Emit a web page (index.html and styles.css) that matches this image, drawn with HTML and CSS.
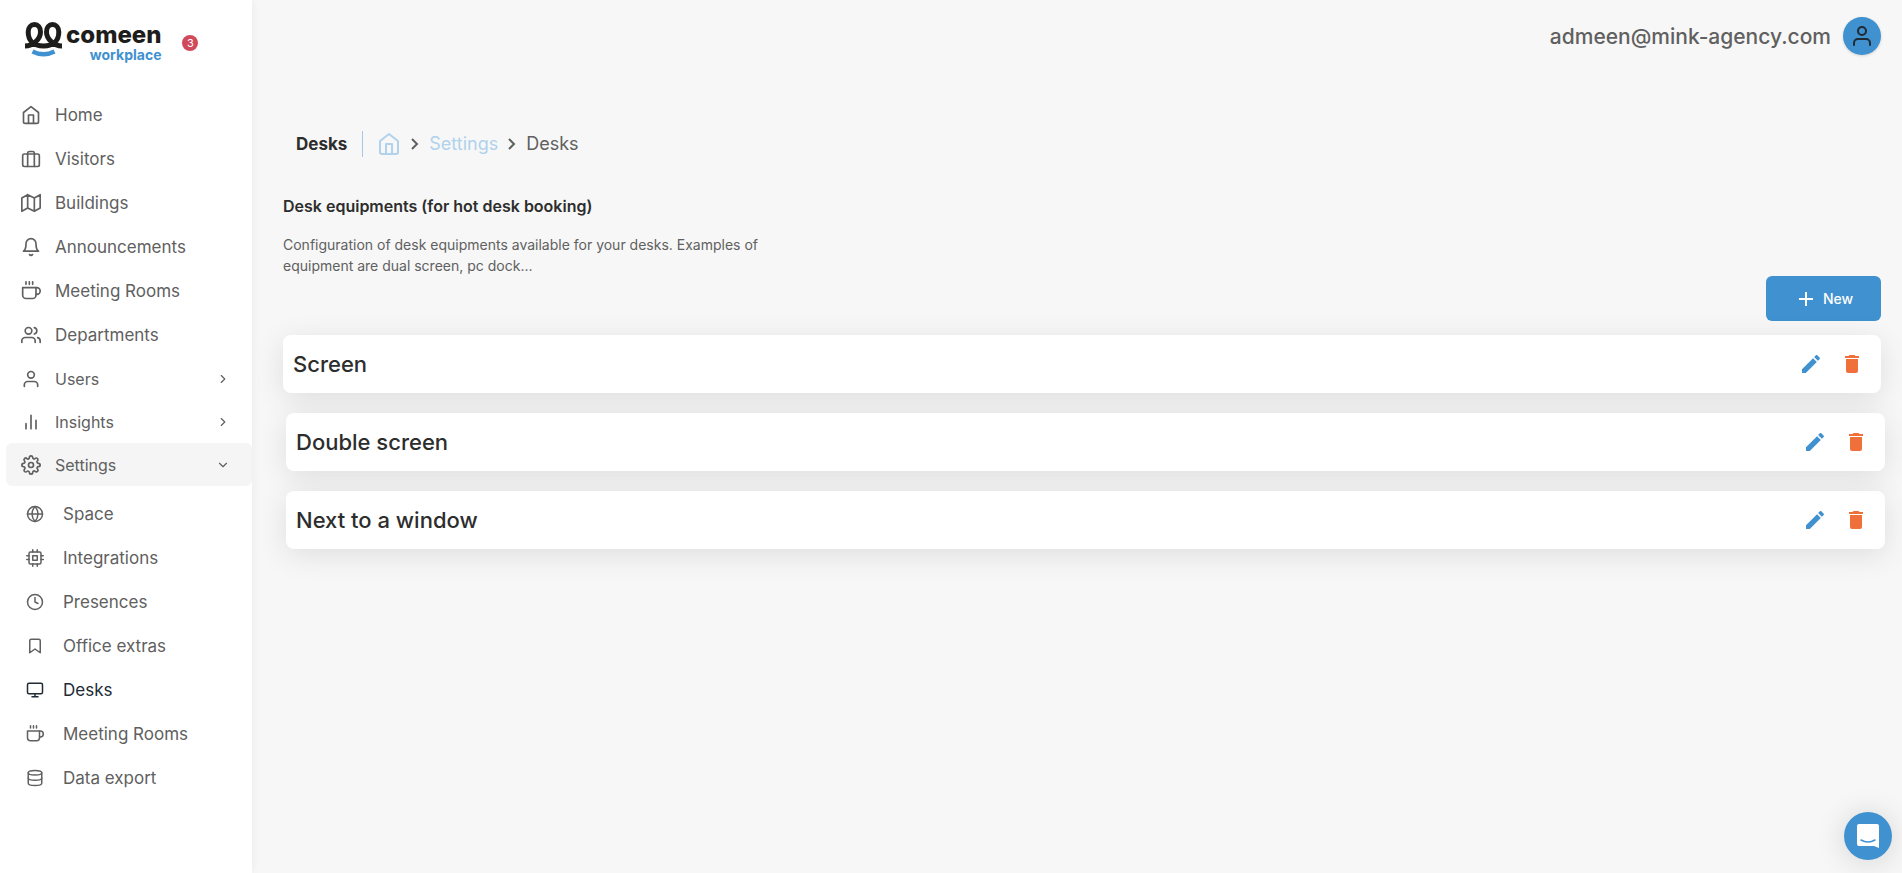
FILE: index.html
```html
<!DOCTYPE html>
<html lang="en">
<head>
    <meta charset="UTF-8">
    <meta name="viewport" content="width=device-width, initial-scale=1.0">
    <title>Desks - Comeen Workplace</title>
    <link rel="stylesheet" href="styles.css">
</head>
<body>
    <!-- shared icons -->
    <svg class="sprite" aria-hidden="true">
        <symbol id="home" viewBox="0 0 24 24"><path d="M3 9l9-7 9 7v11a2 2 0 0 1-2 2H5a2 2 0 0 1-2-2z"/><path d="M9 22V12h6v10"/></symbol>
        <symbol id="coffee" viewBox="0 0 24 24"><path d="M18 8h1a4 4 0 0 1 0 8h-1"/><path d="M2 8h16v9a4 4 0 0 1-4 4H6a4 4 0 0 1-4-4z"/><path d="M6 1v3M10 1v3M14 1v3"/></symbol>
        <symbol id="user" viewBox="0 0 24 24"><path d="M20 21v-2a4 4 0 0 0-4-4H8a4 4 0 0 0-4 4v2"/><circle cx="12" cy="7" r="4"/></symbol>
        <symbol id="chevron-right" viewBox="0 0 24 24"><path d="M9 18l6-6-6-6"/></symbol>
        <symbol id="chevron-down" viewBox="0 0 24 24"><path d="M6 9l6 6 6-6"/></symbol>
        <symbol id="pencil" viewBox="0 0 24 24"><path d="M20.71 7.04c.39-.39.39-1.04 0-1.41l-2.34-2.34c-.37-.39-1.02-.39-1.41 0l-1.84 1.83 3.75 3.75M3 17.25V21h3.75L17.81 9.93l-3.75-3.75L3 17.25z"/></symbol>
        <symbol id="trash" viewBox="0 0 24 24"><path d="M19 4h-3.5l-1-1h-5l-1 1H5v2h14M6 19a2 2 0 0 0 2 2h8a2 2 0 0 0 2-2V7H6v12z"/></symbol>
    </svg>

    <aside class="sidebar">
        <div class="brand">
            <a class="logo" href="#">
                <svg class="logo-mark" viewBox="0 0 37 36" aria-hidden="true">
                    <path d="M0 24C8 24 15.500 17 15.500 10C15.500 5.500 13 2.500 9.500 2.500C6 2.500 3.200 5.500 3.200 10C3.200 18 8 24 18.500 24S33.800 18 33.800 10C33.800 5.500 31 2.500 27.500 2.500C24 2.500 21.500 5.500 21.500 10C21.500 17 29 24 37 24" fill="none" stroke="#1d1d1b" stroke-width="5"/>
                    <path d="M7.500 29.500Q18.500 35 29.500 29.500" fill="none" stroke="#3f91cf" stroke-width="4.500"/>
                </svg>
                <span class="logo-text">
                    <span class="logo-name">comeen</span>
                    <span class="logo-product">workplace</span>
                </span>
            </a>
            <span class="badge">3</span>
        </div>

        <nav class="menu">
            <a href="#"><svg class="icon"><use href="#home"/></svg>Home</a>
            <a href="#"><svg class="icon" viewBox="0 0 24 24"><rect x="2" y="6" width="20" height="15" rx="2"/><path d="M16 21V5a2 2 0 0 0-2-2h-4a2 2 0 0 0-2 2v16"/></svg>Visitors</a>
            <a href="#"><svg class="icon" viewBox="0 0 24 24"><path d="M1 6v16l7-4 8 4 7-4V2l-7 4-8-4zM8 2v16M16 6v16"/></svg>Buildings</a>
            <a href="#"><svg class="icon" viewBox="0 0 24 24"><path d="M18 8A6 6 0 0 0 6 8c0 7-3 9-3 9h18s-3-2-3-9"/><path d="M13.730 21a2 2 0 0 1-3.460 0"/></svg>Announcements</a>
            <a href="#"><svg class="icon"><use href="#coffee"/></svg>Meeting Rooms</a>
            <a href="#"><svg class="icon" viewBox="0 0 24 24"><path d="M17 21v-2a4 4 0 0 0-4-4H5a4 4 0 0 0-4 4v2"/><circle cx="9" cy="7" r="4"/><path d="M23 21v-2a4 4 0 0 0-3-3.870M16 3.130a4 4 0 0 1 0 7.750"/></svg>Departments</a>
            <button type="button"><svg class="icon"><use href="#user"/></svg>Users<svg class="icon arrow"><use href="#chevron-right"/></svg></button>
            <button type="button"><svg class="icon" viewBox="0 0 24 24"><path d="M18 20V10M12 20V4M6 20v-6"/></svg>Insights<svg class="icon arrow"><use href="#chevron-right"/></svg></button>
            <button type="button" class="open" aria-expanded="true"><svg class="icon" viewBox="0 0 24 24"><circle cx="12" cy="12" r="3"/><path d="M19.400 15a1.650 1.650 0 0 0 .33 1.820l.06.06a2 2 0 1 1-2.830 2.830l-.06-.06a1.650 1.650 0 0 0-1.820-.33 1.650 1.650 0 0 0-1 1.510V21a2 2 0 0 1-4 0v-.09A1.650 1.650 0 0 0 9 19.400a1.650 1.650 0 0 0-1.820.33l-.06.06a2 2 0 1 1-2.830-2.830l.06-.06a1.650 1.650 0 0 0 .33-1.820 1.650 1.650 0 0 0-1.510-1H3a2 2 0 0 1 0-4h.09A1.650 1.650 0 0 0 4.600 9a1.650 1.650 0 0 0-.33-1.820l-.06-.06a2 2 0 1 1 2.830-2.830l.06.06a1.650 1.650 0 0 0 1.820.33H9a1.650 1.650 0 0 0 1-1.510V3a2 2 0 0 1 4 0v.09a1.650 1.650 0 0 0 1 1.510 1.650 1.650 0 0 0 1.820-.33l.06-.06a2 2 0 1 1 2.830 2.830l-.06.06a1.650 1.650 0 0 0-.33 1.820V9a1.650 1.650 0 0 0 1.510 1H21a2 2 0 0 1 0 4h-.09a1.650 1.650 0 0 0-1.510 1z"/></svg>Settings<svg class="icon arrow"><use href="#chevron-down"/></svg></button>
            <div class="submenu">
                <a href="#"><svg class="icon" viewBox="0 0 24 24"><circle cx="12" cy="12" r="10"/><path d="M2 12h20M12 2a15.300 15.300 0 0 1 4 10 15.300 15.300 0 0 1-4 10 15.300 15.300 0 0 1-4-10 15.300 15.300 0 0 1 4-10z"/></svg>Space</a>
                <a href="#"><svg class="icon" viewBox="0 0 24 24"><rect x="4" y="4" width="16" height="16" rx="2"/><path d="M9 9h6v6H9zM9 1v3M15 1v3M9 20v3M15 20v3M20 9h3M20 14h3M1 9h3M1 14h3"/></svg>Integrations</a>
                <a href="#"><svg class="icon" viewBox="0 0 24 24"><circle cx="12" cy="12" r="10"/><path d="M12 6v6l4 2"/></svg>Presences</a>
                <a href="#"><svg class="icon" viewBox="0 0 24 24"><path d="M19 21l-7-5-7 5V5a2 2 0 0 1 2-2h10a2 2 0 0 1 2 2z"/></svg>Office extras</a>
                <a href="#" class="active"><svg class="icon" viewBox="0 0 24 24"><rect x="2" y="3" width="20" height="14" rx="2"/><path d="M8 21h8M12 17v4"/></svg>Desks</a>
                <a href="#"><svg class="icon"><use href="#coffee"/></svg>Meeting Rooms</a>
                <a href="#"><svg class="icon" viewBox="0 0 24 24"><ellipse cx="12" cy="5" rx="9" ry="3"/><path d="M21 12c0 1.660-4 3-9 3s-9-1.340-9-3"/><path d="M3 5v14c0 1.660 4 3 9 3s9-1.340 9-3V5"/></svg>Data export</a>
            </div>
        </nav>
    </aside>

    <main class="content">
        <header class="topbar">
            <span>admeen@mink-agency.com</span>
            <button type="button" class="avatar" aria-label="Account"><svg class="icon"><use href="#user"/></svg></button>
        </header>

        <nav class="breadcrumb">
            <strong>Desks</strong>
            <a href="#" aria-label="Home"><svg class="icon crumb-home"><use href="#home"/></svg></a>
            <svg class="crumb-arrow" viewBox="0 0 8 12"><path d="M1 1l5 5-5 5"/></svg>
            <a href="#">Settings</a>
            <svg class="crumb-arrow" viewBox="0 0 8 12"><path d="M1 1l5 5-5 5"/></svg>
            <span>Desks</span>
        </nav>

        <section>
            <h1>Desk equipments (for hot desk booking)</h1>
            <p class="intro">Configuration of desk equipments available for your desks. Examples of equipment are dual screen, pc dock...</p>
            <div class="actions">
                <button type="button" class="new"><svg viewBox="0 0 24 24"><path d="M19 13h-6v6h-2v-6H5v-2h6V5h2v6h6v2z"/></svg>New</button>
            </div>
            <div class="cards">
                <article class="card">
                    <h2>Screen</h2>
                    <button type="button" class="edit" aria-label="Edit"><svg><use href="#pencil"/></svg></button>
                    <button type="button" class="delete" aria-label="Delete"><svg><use href="#trash"/></svg></button>
                </article>
                <article class="card">
                    <h2>Double screen</h2>
                    <button type="button" class="edit" aria-label="Edit"><svg><use href="#pencil"/></svg></button>
                    <button type="button" class="delete" aria-label="Delete"><svg><use href="#trash"/></svg></button>
                </article>
                <article class="card">
                    <h2>Next to a window</h2>
                    <button type="button" class="edit" aria-label="Edit"><svg><use href="#pencil"/></svg></button>
                    <button type="button" class="delete" aria-label="Delete"><svg><use href="#trash"/></svg></button>
                </article>
            </div>
        </section>
    </main>

    <button type="button" class="chat" aria-label="Open chat">
        <svg viewBox="0 0 22 24"><path d="M2 0h18a2 2 0 0 1 2 2v22l-5-2H2a2 2 0 0 1-2-2V2a2 2 0 0 1 2-2z" fill="#fff"/><path d="M4 16q7 4 14 0" fill="none" stroke="#3f91cf" stroke-width="1.500" stroke-linecap="round"/></svg>
    </button>
</body>
</html>
```
FILE: styles.css
```css
* {
    box-sizing: border-box;
}
body {
    margin: 0;
    min-height: 100vh;
    display: flex;
    background: #f7f7f7;
    color: #606060;
    font-family: Inter, "Liberation Sans", sans-serif;
    font-size: 17px;
}
a {
    color: inherit;
    text-decoration: none;
}
button {
    padding: 0;
    border: none;
    background: none;
    color: inherit;
    font: inherit;
    cursor: pointer;
}
svg {
    display: block;
    flex: none;
}
.sprite {
    position: absolute;
    width: 0;
    height: 0;
}
.icon {
    width: 20px;
    height: 20px;
    fill: none;
    stroke: currentColor;
    stroke-width: 2;
    stroke-linecap: round;
    stroke-linejoin: round;
}

/* sidebar */
.sidebar {
    width: 252px;
    flex: none;
    background: #fff;
    box-shadow: 0 0 10px rgba(0, 0, 0, 0.06);
}
.brand {
    display: flex;
    align-items: flex-start;
    gap: 21px;
    height: 93px;
    padding: 22px 0 0 25px;
}
.logo {
    display: flex;
    gap: 4px;
}
.logo-mark {
    width: 37px;
    height: 36px;
}
.logo-text {
    display: flex;
    flex-direction: column;
    align-items: flex-end;
}
.logo-name {
    color: #1d1d1b;
    font-size: 24px;
    font-weight: 800;
    line-height: 26px;
}
.logo-product {
    color: #3f91cf;
    font-size: 14px;
    font-weight: 700;
    line-height: 14px;
}
.badge {
    width: 16px;
    margin-top: 13px;
    border-radius: 50%;
    background: #d04a5c;
    color: #fff;
    font-size: 11px;
    line-height: 16px;
    text-align: center;
}
.menu {
    padding-left: 6px;
}
.menu a,
.menu button {
    display: flex;
    align-items: center;
    gap: 14px;
    width: 100%;
    height: 44px;
    padding-left: 15px;
}
.menu button {
    height: 43px;
    padding-right: 22px;
    border-radius: 6px;
    font-size: 16px;
}
.menu .open {
    background: #f5f5f5;
}
.menu .arrow {
    width: 14px;
    height: 14px;
    margin-left: auto;
}
.submenu {
    padding-top: 6px;
}
.submenu a {
    gap: 19px;
    padding-left: 20px;
}
.submenu .icon {
    width: 18px;
    height: 18px;
}
.submenu .active {
    color: #212b36;
}

/* content */
.content {
    flex: 1;
    padding: 17px 21px 17px 31px;
}
.topbar {
    display: flex;
    justify-content: flex-end;
    align-items: center;
    gap: 12px;
    font-size: 21px;
    font-weight: 500;
}
.avatar {
    display: flex;
    justify-content: center;
    align-items: center;
    width: 38px;
    height: 38px;
    border-radius: 50%;
    background: #3f91cf;
    color: #202a33;
    box-shadow: 0 1px 3px rgba(0, 0, 0, 0.15);
}
.avatar .icon {
    width: 24px;
    height: 24px;
}
.breadcrumb {
    display: flex;
    align-items: center;
    gap: 10px;
    margin: 76px 0 37px 13px;
    font-size: 18px;
    line-height: 26px;
}
.breadcrumb strong {
    margin-right: 4px;
    padding-right: 15px;
    border-right: 1px solid #a9c8e0;
    color: #2d2d2d;
    font-size: 17px;
}
.breadcrumb a {
    color: #b0d2ec;
}
.crumb-home {
    width: 24px;
    height: 24px;
    stroke-width: 2;
}
.crumb-arrow {
    width: 8px;
    height: 12px;
    fill: none;
    stroke: #606060;
    stroke-width: 2;
}
h1 {
    margin: 0 0 16px;
    color: #2d2d2d;
    font-size: 16px;
    font-weight: 600;
    line-height: 24px;
}
.intro {
    max-width: 510px;
    margin: 0;
    font-size: 14px;
    line-height: 21px;
}
.actions {
    display: flex;
    justify-content: flex-end;
    margin-bottom: 14px;
}
.new {
    display: flex;
    justify-content: center;
    align-items: center;
    gap: 5px;
    width: 115px;
    height: 45px;
    border-radius: 6px;
    background: #3f91cf;
    color: #fff;
    font-size: 14px;
    font-weight: 500;
}
.new svg {
    width: 24px;
    height: 24px;
    fill: #fff;
}
.cards {
    display: flex;
    flex-direction: column;
    gap: 20px;
}
.card {
    display: flex;
    align-items: center;
    gap: 17px;
    height: 58px;
    padding: 0 17px 0 10px;
    border-radius: 8px;
    background: #fff;
    box-shadow: 0 6px 30px rgba(0, 0, 0, 0.1);
}
.card + .card {
    margin: 0 -4px 0 3px;
}
.card h2 {
    flex: 1;
    margin: 0;
    color: #2d2d2d;
    font-size: 22px;
    font-weight: 500;
}
.card svg {
    width: 24px;
    height: 24px;
    fill: currentColor;
}
.edit {
    color: #3f91cf;
}
.delete {
    color: #f0703c;
}
.chat {
    position: fixed;
    right: 10px;
    bottom: 13px;
    display: flex;
    justify-content: center;
    align-items: center;
    width: 48px;
    height: 48px;
    border-radius: 50%;
    background: #3f91cf;
    box-shadow: 0 2px 30px rgba(0, 0, 0, 0.15);
}
.chat svg {
    width: 22px;
    height: 24px;
}
```
